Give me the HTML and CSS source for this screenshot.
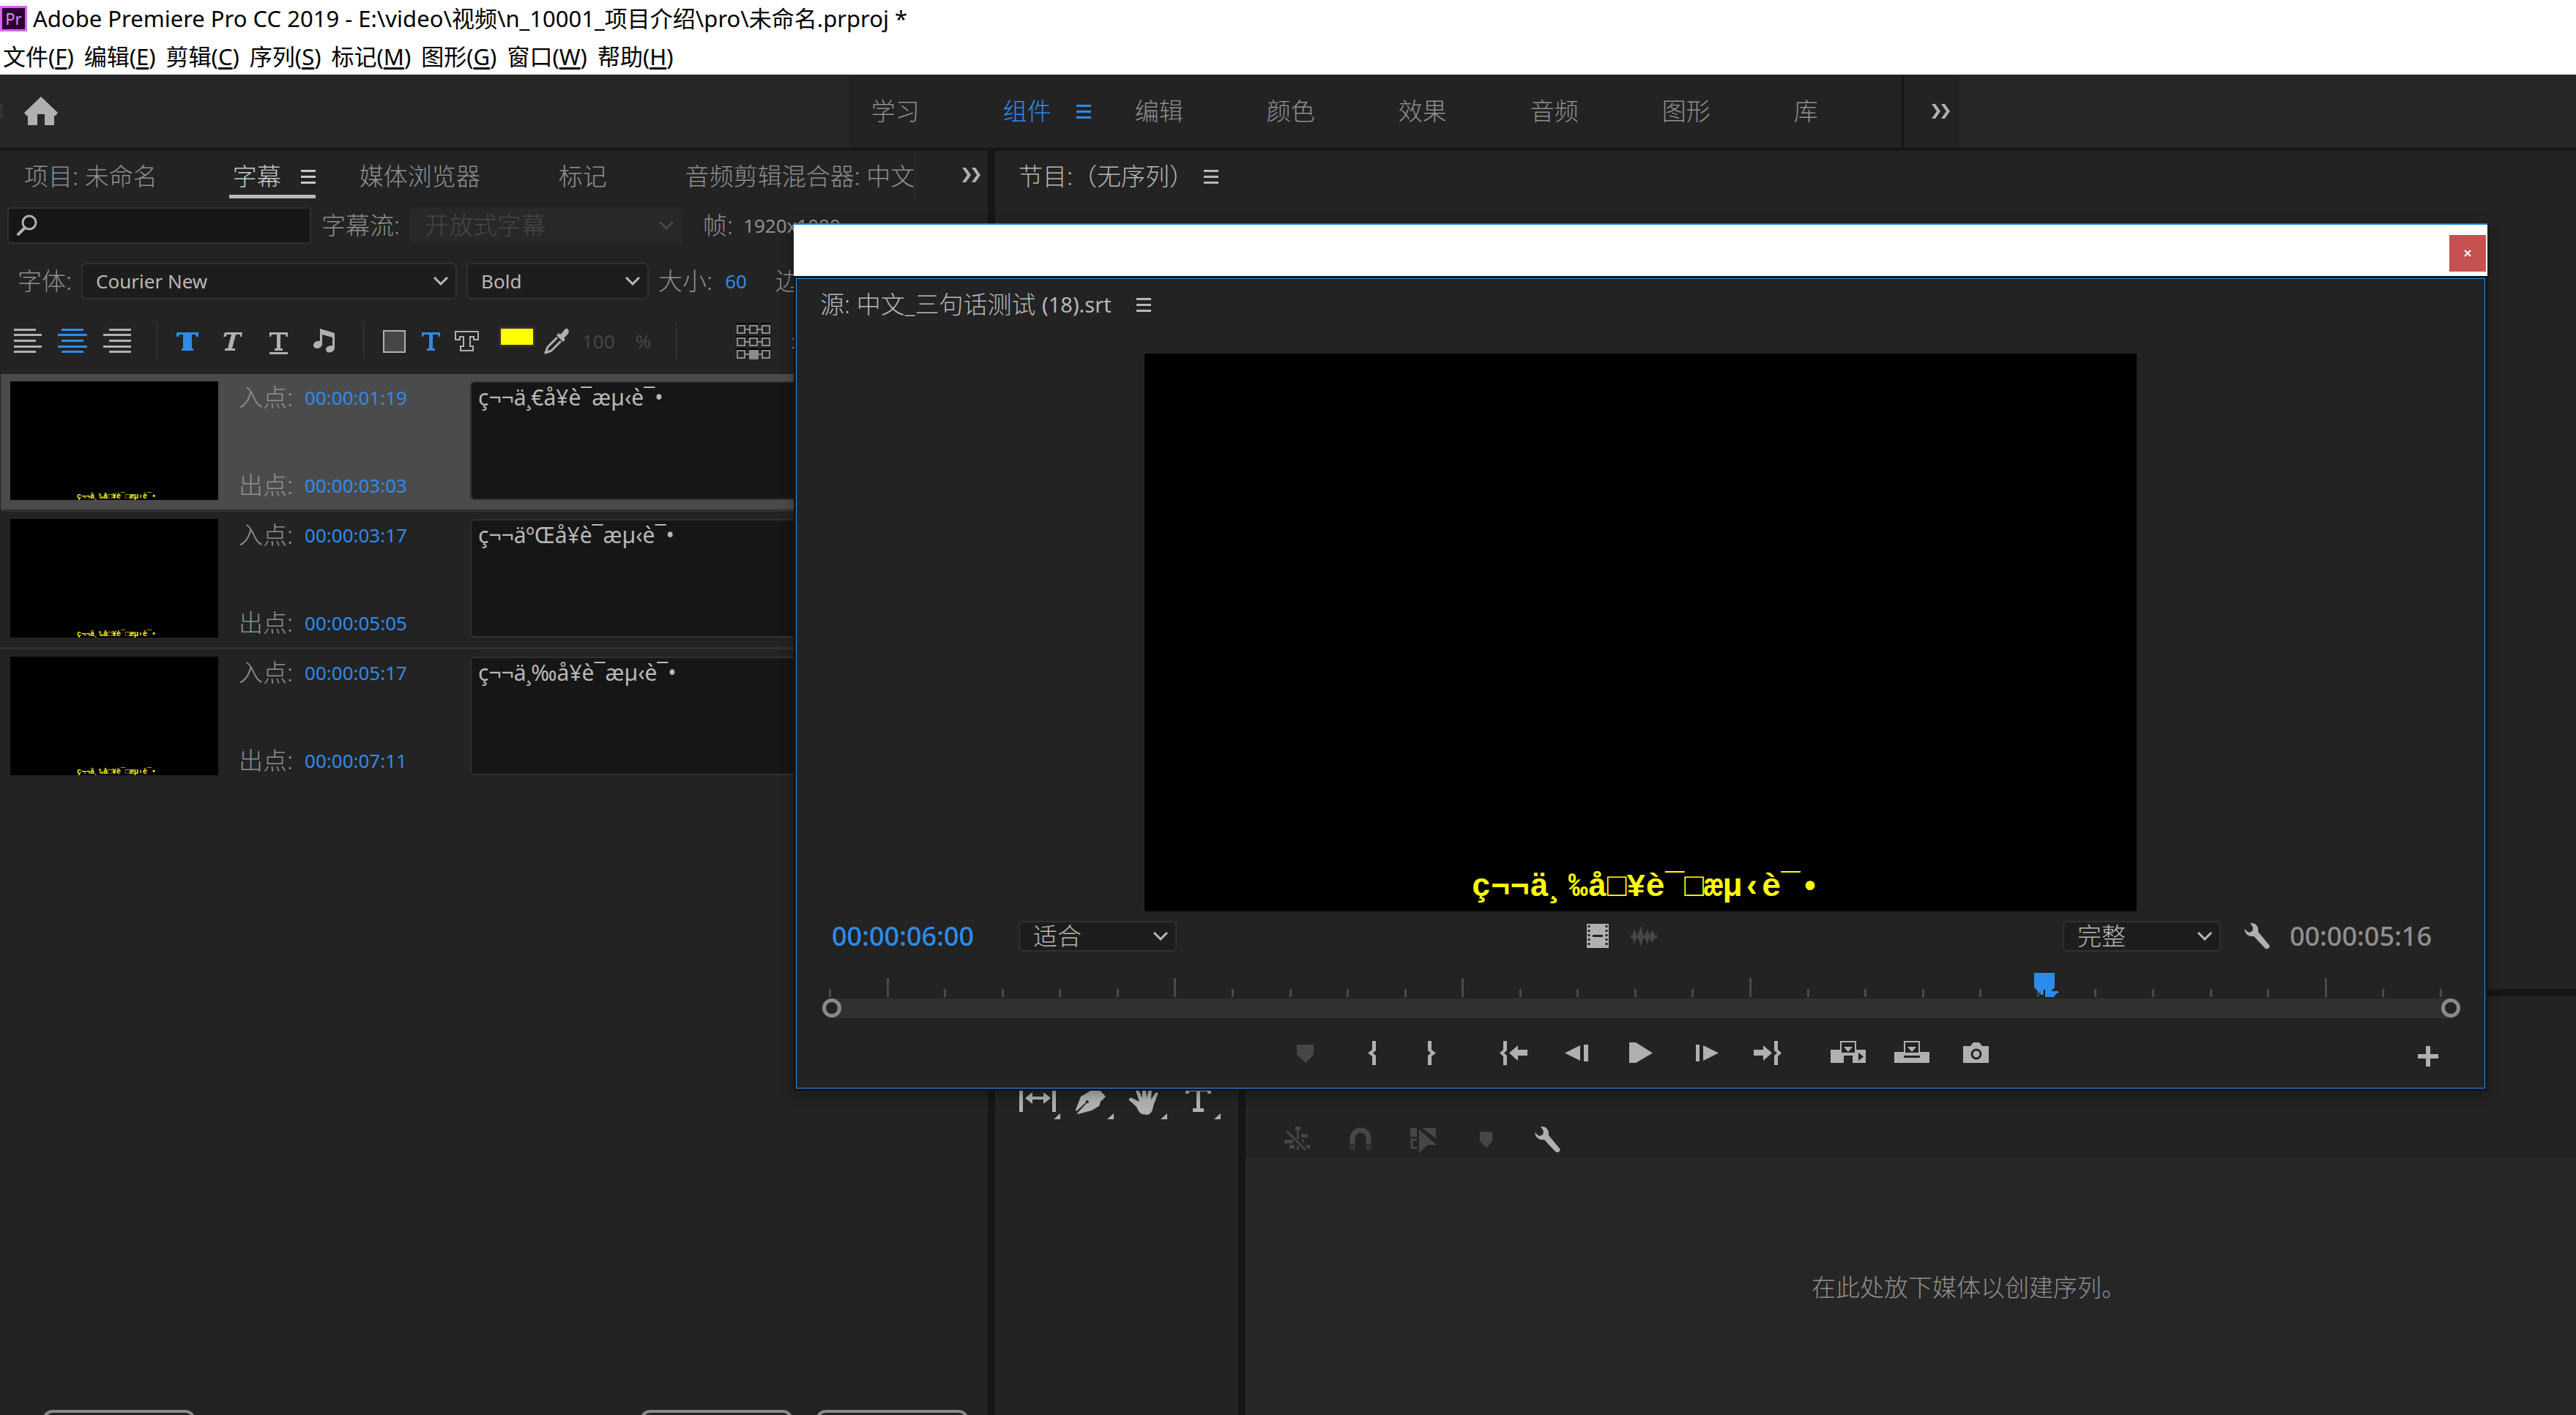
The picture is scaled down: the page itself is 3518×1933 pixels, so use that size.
FILE: index.html
```html
<!DOCTYPE html>
<html lang="zh-CN">
<head>
<meta charset="utf-8">
<title>Adobe Premiere Pro CC 2019</title>
<link rel="stylesheet" href="styles.css">
</head>
<body>
<div class="app">
  <header class="titlebar">
    <span class="logo">Pr</span>
    <h1>Adobe Premiere Pro CC 2019 - E:\video\视频\n_10001_项目介绍\pro\未命名.prproj *</h1>
  </header>
  <nav class="menubar">
    <button>文件(<u>F</u>)</button><button>编辑(<u>E</u>)</button><button>剪辑(<u>C</u>)</button><button>序列(<u>S</u>)</button><button>标记(<u>M</u>)</button><button>图形(<u>G</u>)</button><button>窗口(<u>W</u>)</button><button>帮助(<u>H</u>)</button>
  </nav>

  <div class="workspaces">
    <div class="ws-home">
      <span class="grip"></span>
      <button aria-label="主页"><svg width="46" height="40" viewBox="0 0 46 40"><path d="M23 0L46 22l-3 4h-2v13H28V24H18v15H5V26H3l-3-4z"/></svg></button>
    </div>
    <nav class="ws-tabs">
      <button>学习</button>
      <button class="active">组件<svg width="20" height="20" viewBox="0 0 20 20"><path d="M0 1h20v3H0zM0 9h20v3H0zM0 17h20v3H0z"/></svg></button>
      <button>编辑</button><button>颜色</button><button>效果</button><button>音频</button><button>图形</button><button>库</button>
    </nav>
    <button class="ws-more" aria-label="更多工作区"><svg width="28" height="22" viewBox="0 0 28 22"><path d="M1 1h5l7 10-7 10H1l7-10zM14 1h5l7 10-7 10h-5l7-10z"/></svg></button>
    <div class="ws-rest"></div>
  </div>

  <main class="panels">
    <section class="panel captions">
      <nav class="tabs">
        <button>项目: 未命名</button>
        <button class="active">字幕<svg width="20" height="20" viewBox="0 0 20 20"><path d="M0 1h20v3H0zM0 9h20v3H0zM0 17h20v3H0z"/></svg></button>
        <button>媒体浏览器</button>
        <button>标记</button>
        <button class="last">音频剪辑混合器: 中文</button>
        <button class="more" aria-label="更多面板"><svg width="28" height="22" viewBox="0 0 28 22"><path d="M1 1h5l7 10-7 10H1l7-10zM14 1h5l7 10-7 10h-5l7-10z"/></svg></button>
      </nav>
      <div class="row filter">
        <label class="search">
          <svg width="30" height="30" viewBox="0 0 30 30"><circle cx="18" cy="11" r="9" fill="none" stroke="currentColor" stroke-width="3"/><path d="M12 18L3 27" stroke="currentColor" stroke-width="4" stroke-linecap="round"/></svg>
          <input type="text" aria-label="搜索字幕">
        </label>
        <label for="stream">字幕流:</label>
        <span class="select stream"><select id="stream" disabled><option>开放式字幕</option></select><svg width="20" height="12" viewBox="0 0 20 12"><path d="M1 1l9 9 9-9"/></svg></span>
        <span class="frame">帧: </span><span class="latin">1920x1080</span>
      </div>
      <div class="row font">
        <label for="family">字体:</label>
        <span class="select family"><select id="family"><option>Courier New</option></select><svg width="20" height="12" viewBox="0 0 20 12"><path d="M1 1l9 9 9-9"/></svg></span>
        <span class="select style"><select aria-label="样式"><option>Bold</option></select><svg width="20" height="12" viewBox="0 0 20 12"><path d="M1 1l9 9 9-9"/></svg></span>
        <span>大小:</span><a class="latin value" href="#">60</a><span class="edge">边缘:</span>
      </div>
      <div class="toolbar">
        <div class="tools align">
          <button aria-label="左对齐"><svg width="40" height="40" viewBox="0 0 40 40"><path d="M1 3h30v3H1zM1 10h38v3H1zM1 18h30v3H1zM1 26h38v3H1zM1 33h30v3H1z"/></svg></button>
          <button class="on" aria-label="居中"><svg width="40" height="40" viewBox="0 0 40 40"><path d="M5 3h30v3H5zM0 10h40v3H0zM5 18h30v3H5zM0 26h40v3H0zM5 33h30v3H5z"/></svg></button>
          <button aria-label="右对齐"><svg width="40" height="40" viewBox="0 0 40 40"><path d="M9 3h30v3H9zM1 10h38v3H1zM9 18h30v3H9zM1 26h38v3H1zM9 33h30v3H9z"/></svg></button>
        </div>
        <i class="sep"></i>
        <div class="tools type">
          <button class="on" aria-label="粗体"><svg width="40" height="40" viewBox="0 0 40 40"><path d="M5 8h30v6h-3l-1-3h-5v19h2v3H12v-3h2V11H9l-1 3H5z"/></svg></button>
          <button aria-label="斜体"><svg width="40" height="40" viewBox="0 0 40 40"><path d="M9 8h24l-1 6h-2v-3h-6l-5 19h4v3H9v-3h4l5-19h-6l-2 3H7z"/></svg></button>
          <button aria-label="下划线"><svg width="40" height="40" viewBox="0 0 40 40"><path d="M8 8h25v6h-2l-1-3h-7v19h3v3H15v-3h3V11h-7l-1 3H8zM8 35h25v3H8z"/></svg></button>
          <button aria-label="音乐符号"><svg width="40" height="40" viewBox="0 0 40 40"><path d="M15 3l20 6v20c0 7-11 9-12 3 0-4 4-6 9-6V15L18 11v13c0 6-11 9-12 2 0-4 4-7 9-6z"/></svg></button>
        </div>
        <i class="sep"></i>
        <div class="tools fill">
          <button aria-label="背景颜色"><svg width="40" height="40" viewBox="0 0 40 40"><path d="M6 6h29v29H6z" fill="#464646" stroke="#b0b0b0" stroke-width="2"/></svg></button>
          <button class="on" aria-label="文本颜色"><svg width="40" height="40" viewBox="0 0 40 40"><path d="M8 8h25v6h-2l-1-3h-7v19h3v3H15v-3h3V11h-7l-1 3H8z"/></svg></button>
          <button aria-label="边缘颜色"><svg width="40" height="40" viewBox="0 0 40 40"><path d="M4 7h31v11h-6v-4h-5v13h4v6H11v-6h4V14h-5v4H4z" fill="none" stroke="#b0b0b0" stroke-width="2"/></svg></button>
        </div>
        <input class="swatch" type="color" value="#ffff00" aria-label="颜色">
        <button class="dropper" aria-label="吸管"><svg width="40" height="40" viewBox="0 0 40 40"><path d="M35 3c3 3 2 6-1 9l-4 4 2 2-3 3-9-9 3-3 2 2 4-4c2-3 4-5 6-4z"/><path d="M21 15L8 28l-3 8 8-3 13-13" fill="none" stroke="currentColor" stroke-width="3" stroke-linejoin="round"/></svg></button>
        <span class="latin dim">100</span><span class="latin dim pct">%</span>
        <i class="sep wide"></i>
        <button class="grid9" aria-label="位置"><svg width="48" height="50" viewBox="0 0 48 50"><path d="M1 0h13v2H1zM17 0h14v2H17zM34 0h13v2H34zM1 18h13v2H1zM17 18h14v2H17zM34 18h13v2H34zM1 35h13v2H1zM17 35h14v2H17zM34 35h13v2H34z" fill="#000"/><path d="M2 4h10v10H2zM19 4h10v10H19zM36 4h10v10H36zM2 21h10v10H2zM19 21h10v10H19zM36 21h10v10H36zM2 38h10v10H2zM36 38h10v10H36zM12 9h7M29 9h7M12 26h7M29 26h7M12 43h7M29 43h7" fill="none" stroke="#8c8c8c" stroke-width="2"/><path d="M18 37h13v13H18z" fill="#8c8c8c"/></svg></button>
        <span class="latin">x:</span>
      </div>
      <ol class="captions-list">
        <li class="selected">
          <div class="thumb"><span>ç¬¬ä¸‰å□¥è¯□æµ‹è¯•</span></div>
          <div class="times"><div>入点: <a href="#">00:00:01:19</a></div><div>出点: <a href="#">00:00:03:03</a></div></div>
          <textarea aria-label="字幕 1">ç¬¬ä¸€å¥è¯æµ‹è¯•</textarea>
        </li>
        <li>
          <div class="thumb"><span>ç¬¬ä¸‰å□¥è¯□æµ‹è¯•</span></div>
          <div class="times"><div>入点: <a href="#">00:00:03:17</a></div><div>出点: <a href="#">00:00:05:05</a></div></div>
          <textarea aria-label="字幕 2">ç¬¬äºŒå¥è¯æµ‹è¯•</textarea>
        </li>
        <li>
          <div class="thumb"><span>ç¬¬ä¸‰å□¥è¯□æµ‹è¯•</span></div>
          <div class="times"><div>入点: <a href="#">00:00:05:17</a></div><div>出点: <a href="#">00:00:07:11</a></div></div>
          <textarea aria-label="字幕 3">ç¬¬ä¸‰å¥è¯æµ‹è¯•</textarea>
        </li>
      </ol>
      <footer class="actions">
        <button aria-label="导入设置"></button><button class="add" aria-label="添加字幕"></button><button aria-label="删除字幕"></button>
      </footer>
    </section>

    <div class="right">
      <section class="panel program">
        <h2 class="panel-title">节目:（无序列）<svg width="20" height="20" viewBox="0 0 20 20"><path d="M0 1h20v3H0zM0 9h20v3H0zM0 17h20v3H0z"/></svg></h2>
      </section>
      <div class="bottom">
        <section class="panel toolbox">
          <button aria-label="外滑工具"><svg width="60" height="50" viewBox="0 0 60 50"><path d="M2 8h5v31H2zM47 8h5v31h-5zM10 20l10-8v6h15v-6l10 8-10 8v-6H20v6zM58 41v8h-9z"/></svg></button>
          <button aria-label="钢笔工具"><svg width="60" height="50" viewBox="0 0 60 50"><path d="M28 9l8 3 6 7-4 12-10 6-19 5-1-1 13-14c3 1 4-3 1-4-1 0-3 1-2 3L7 38l-1-2 7-18zM35 5l12 13-6 6-12-13zM58 41v8h-9z"/></svg></button>
          <button aria-label="手形工具"><svg width="60" height="50" viewBox="0 0 60 50"><path d="M24 42c-6-2-6-9-10-12L6 23c-1-4 4-4 6-2l8 4-5-15c1-3 4-2 5 1l4 9V7c1-3 4-3 5 0l1 13 3-13c1-3 5-2 4 1l-1 14 6-9c2-2 4 0 3 2l-6 16c-1 6-3 11-8 12zM58 41v8h-9z"/></svg></button>
          <button aria-label="文字工具"><svg width="60" height="50" viewBox="0 0 60 50"><path d="M10 6h35v8h-5v-3H30v23h5v5H20v-5h5V11H15v3h-5zM58 41v8h-9z"/></svg></button>
        </section>
        <section class="panel timeline">
          <div class="tl-tools">
            <button aria-label="嵌套"><svg width="40" height="40" viewBox="0 0 40 40"><path d="M17 2h7v5h-2v12h-3V7h-2zM25 12h9v5h-9zM2 20h12v5H2zM9 27h7v5H9zM19 28h3v6h-3zM25 20h4v5zM31 27h6v5h-3z"/><path d="M5 8l26 26" stroke="currentColor" stroke-width="3"/></svg></button>
            <button aria-label="对齐"><svg width="40" height="40" viewBox="0 0 40 40"><path d="M9 26V18a11 11 0 0122 0v8" fill="none" stroke="currentColor" stroke-width="7"/><path d="M5 27h8v7H5zM27 27h8v7h-8z" opacity=".5"/></svg></button>
            <button aria-label="链接选择项"><svg width="40" height="40" viewBox="0 0 40 40"><path d="M2 4h9v12H2zM18 4h19v14zM14 6l24 21H26L14 38z"/><path d="M11 20H4v11h7" fill="none" stroke="currentColor" stroke-width="3"/></svg></button>
            <button aria-label="标记"><svg width="40" height="40" viewBox="0 0 40 40"><path d="M11 9h17v13l-8 9-9-9z"/></svg></button>
            <button class="lit" aria-label="设置"><svg width="40" height="40" viewBox="0 0 40 40"><path d="M8 2c8-1 12 5 11 12l15 18c2 4-3 7-6 4L13 20C6 21 1 17 0 10l6 5 5-2 1-5z"/></svg></button>
          </div>
          <p class="drop">在此处放下媒体以创建序列。</p>
        </section>
      </div>
    </div>
  </main>

  <section class="window">
    <div class="win-bar"><button aria-label="关闭"><svg width="10" height="10" viewBox="0 0 10 10"><path d="M1 1l8 8M9 1L1 9" stroke="#fff" stroke-width="2"/></svg></button></div>
    <div class="win-body">
      <h2 class="panel-title">源: 中文_三句话测试 <span class="ext">(18).srt</span><svg width="20" height="20" viewBox="0 0 20 20"><path d="M0 1h20v3H0zM0 9h20v3H0zM0 17h20v3H0z"/></svg></h2>
      <div class="video"><p>ç¬¬ä¸‰å□¥è¯□æµ‹è¯•</p></div>
      <div class="controls">
        <div class="left"><a class="tc" href="#">00:00:06:00</a>
          <span class="select zoom"><select aria-label="缩放级别"><option>适合</option></select><svg width="20" height="12" viewBox="0 0 20 12"><path d="M1 1l9 9 9-9"/></svg></span></div>
        <div class="middle">
          <button aria-label="仅拖动视频"><svg width="40" height="40" viewBox="0 0 40 40"><path d="M5 3h30v33H5z"/><path d="M8 5v30M32 5v30" stroke="#232323" stroke-width="3" stroke-dasharray="3 3"/><path d="M13 18h14v3H13z" fill="#232323"/></svg></button>
          <button class="off" aria-label="仅拖动音频"><svg width="40" height="40" viewBox="0 0 40 40"><path d="M1 19h36v3H1zM3 20l3-10 4 10-4 11zM10 20l5-14 4 14-4 14zM19 20l5-10 3 10-3 11zM26 20l4-9 5 9-5 9z"/></svg></button>
        </div>
        <div class="end">
          <span class="select zoom"><select aria-label="回放分辨率"><option>完整</option></select><svg width="20" height="12" viewBox="0 0 20 12"><path d="M1 1l9 9 9-9"/></svg></span>
          <button aria-label="设置"><svg width="40" height="40" viewBox="0 0 40 40"><path d="M12 2c8-1 12 5 11 12l15 18c2 4-3 7-6 4L17 20C10 21 5 17 4 10l6 5 5-2 1-5z"/></svg></button>
          <span class="tc dur">00:00:05:16</span>
        </div>
      </div>
      <div class="ruler"><i></i><i></i><i></i><i></i><i></i><i></i><i></i><i></i><i></i><i></i><i></i><i></i><i></i><i></i><i></i><i></i><i></i><i></i><i></i><i></i><i></i><i></i><i></i><i></i><i></i><i></i><i></i><i></i><i></i>
        <svg class="playhead" width="34" height="33" viewBox="0 0 34 33"><path d="M0 0h28v20l-5 5h10v3h-3v2h-2v3H15v-3h-5L0 20z" fill="#2d8ceb"/><path d="M13 23h2v7h-2z" fill="#000"/></svg>
      </div>
      <div class="scrub"><button aria-label="缩小范围起点"></button><button aria-label="缩小范围终点"></button></div>
      <div class="transport">
        <div class="keys">
          <button class="off" aria-label="添加标记"><svg width="48" height="36" viewBox="0 0 48 36"><path d="M11 6h23v14L23 31 11 20z"/></svg></button>
          <button aria-label="标记入点"><svg width="48" height="36" viewBox="0 0 48 36"><path d="M32 1h-5v12l-6 4.500 6 4.500v12h5V21l-4-3.500 4-3.500z"/></svg></button>
          <button aria-label="标记出点"><svg width="48" height="36" viewBox="0 0 48 36"><path d="M16 1h5v12l6 4.500-6 4.500v12h-5V21l4-3.500-4-3.500z"/></svg></button>
        </div>
        <div class="keys">
          <button aria-label="转到入点"><svg width="48" height="36" viewBox="0 0 48 36"><path d="M15 1h-5v12l-5 4.500 5 4.500v12h5V21l-4-3.500 4-3.500zM18 17.500L30 7v6h13v8H30v7z"/></svg></button>
          <button aria-label="后退一帧"><svg width="48" height="36" viewBox="0 0 48 36"><path d="M7 17.500L28 7v21zM33 6h6v23h-6z"/></svg></button>
          <button aria-label="播放"><svg width="48" height="36" viewBox="0 0 48 36"><path d="M8 3h9l23 14.500L17 31H8z"/></svg></button>
          <button aria-label="前进一帧"><svg width="48" height="36" viewBox="0 0 48 36"><path d="M43 17.500L22 7v21zM12 6h5v23h-5z"/></svg></button>
          <button aria-label="转到出点"><svg width="48" height="36" viewBox="0 0 48 36"><path d="M32 1h5v12l5 4.500-5 4.500v12h-5V21l4-3.500-4-3.500zM29 17.500L17 7v6H4v8h13v7z"/></svg></button>
        </div>
        <div class="keys">
          <button aria-label="插入"><svg width="48" height="36" viewBox="0 0 48 36"><path d="M0 13h13v6h22v-6h13v18H30V21H18v10H0z"/><path d="M14 2h20v16H14z" fill="#232323" stroke="currentColor" stroke-width="2"/><path d="M18 9h12l-6 7z"/><path d="M38 17l7 5.500-7 5.500z" fill="#232323"/></svg></button>
          <button aria-label="覆盖"><svg width="48" height="36" viewBox="0 0 48 36"><path d="M0 16h48v15H0z"/><path d="M14 2h20v16H14z" fill="#232323" stroke="currentColor" stroke-width="2"/><path d="M18 9h12l-6 7z"/><path d="M13 21h22v3H13z" fill="#232323"/></svg></button>
          <button aria-label="导出帧"><svg width="48" height="36" viewBox="0 0 48 36"><path d="M7 8h10l4-5h8l4 5h9v23H7z"/><circle cx="25" cy="19" r="6" fill="none" stroke="#232323" stroke-width="3"/></svg></button>
        </div>
        <button class="plus" aria-label="按钮编辑器"><svg width="28" height="28" viewBox="0 0 28 28"><path d="M11 0h6v11h11v6H17v11h-6V17H0v-6h11z"/></svg></button>
      </div>
    </div>
  </section>
</div>
</body>
</html>
```
FILE: styles.css
```css
* { box-sizing: border-box; }
body {
  margin: 0;
  background: #161616;
  color: #8f8f8f;
  font: 300 33px/44px "Noto Sans", "Noto Sans CJK SC", sans-serif;
  overflow: hidden;
}
h1, h2, p, ol { margin: 0; padding: 0; font: inherit; }
button, select, input, textarea { font: inherit; color: inherit; margin: 0; }
button { display: inline-flex; align-items: center; padding: 0; border: 0; background: none; white-space: nowrap; }
svg { display: block; flex: none; fill: currentColor; }
a { color: #2d8ceb; text-decoration: none; }

.app { position: relative; display: flex; flex-direction: column; height: 100vh; }

/* title and menu */
.titlebar, .menubar { display: flex; align-items: center; background: #fff; color: #000; font-size: 31px; font-weight: 400; white-space: nowrap; }
.titlebar { height: 50px; gap: 8px; }
.logo {
  width: 37px; height: 35px; border: 3px solid #d766f0; background: #2a0033;
  color: #e088ff; font: 22px/28px "Noto Sans", sans-serif; text-align: center;
}
.menubar { height: 52px; padding: 4px 0 0 4px; gap: 14px; border-bottom: 2px solid #ececec; }
.menubar u { text-underline-offset: 3px; }

/* workspace bar */
.workspaces { display: flex; height: 100px; margin-bottom: 4px; background: #262626; color: #8f8f8f; }
.ws-home { flex: 11; display: flex; align-items: center; gap: 29px; color: #b0b0b0; }
.grip { width: 4px; height: 20px; background: repeating-linear-gradient(#484848 0 1px, #262626 1px 3px); }
.ws-tabs { display: flex; background: #232323; padding-left: 30px; border-right: 3px solid #161616; }
.ws-tabs button { width: 180px; gap: 34px; }
.ws-tabs button:last-child { width: 147px; }
.ws-tabs .active { color: #2d8ceb; }
.ws-more { width: 75px; padding-left: 37px; background: #232323; color: #b0b0b0; }
.ws-rest { flex: 8; }

/* docked panels */
.panels { flex: 1; min-height: 0; display: grid; grid-template-columns: 1349fr 2159fr; gap: 10px; }
.panel { background: #232323; min-width: 0; overflow: hidden; }
.right { display: flex; flex-direction: column; gap: 10px; min-width: 0; }
.program { flex: 2; }
.bottom { flex: 1; display: grid; grid-template-columns: 332px 1fr; gap: 10px; }
.panel-title { display: flex; align-items: center; height: 70px; padding-left: 32px; color: #b8b8b8; white-space: pre; }
.panel-title svg { margin-left: 14px; }

.captions { display: flex; flex-direction: column; white-space: nowrap; }
.tabs { display: flex; flex: none; gap: 60px; height: 65px; padding-left: 33px; }
.tabs button { height: 65px; padding: 5px 47px 0 0; }
.tabs .active { color: #c8c8c8; gap: 27px; margin-left: -9px; padding: 10px 0 0 5px; border-bottom: 5px solid #b8b8b8; }
.tabs .last { padding-right: 0; border-right: 1px solid #303030; }
.tabs .more { margin-left: auto; padding: 0 8px 0 0; color: #b0b0b0; }
.row { display: flex; flex: none; align-items: center; height: 50px; }
.filter { margin-top: 12px; padding-left: 10px; gap: 14px; }
.font { margin-top: 26px; padding-left: 24px; gap: 13px; }
.search {
  display: flex; align-items: center; width: 415px; height: 50px; padding-left: 10px;
  background: #161616; border: 2px solid #303030; border-radius: 5px; color: #b0b0b0;
}
.search input { flex: 1; min-width: 0; border: 0; background: none; }
.latin { font-size: 26px; font-weight: 400; }
.frame { margin-left: 14px; }
.value { margin-left: 4px; }
.edge { margin-left: 26px; }

.select { display: inline-grid; align-items: center; height: 50px; }
.select > * { grid-area: 1 / 1; }
.select select {
  appearance: none; width: 100%; height: 100%; padding: 0 18px; line-height: 38px;
  background: #1d1d1d; border: 2px solid #303030; border-radius: 6px; color: #b8b8b8;
}
.select svg { justify-self: end; margin-right: 12px; fill: none; stroke: #b8b8b8; stroke-width: 3; pointer-events: none; }
.stream { width: 372px; }
.stream select { background: #282828; border-color: #282828; color: #464646; opacity: 1; }
.stream svg { stroke: #464646; }
.family { width: 513px; }
.style { width: 249px; }
.family select, .style select { font-size: 26px; font-weight: 400; }
.zoom { width: 216px; height: 42px; }

.toolbar { display: flex; flex: none; align-items: center; height: 102px; padding: 12px 0 0 18px; color: #b0b0b0; }
.tools { display: flex; }
.align { gap: 21px; }
.type { gap: 22px; }
.fill { gap: 10px; }
.on { color: #2d8ceb; }
.sep { width: 3px; height: 50px; margin: 0 20px 0 33px; background: #2c2c2c; }
.sep.wide { margin-right: 80px; }
.swatch { width: 50px; height: 28px; margin: 0 9px 12px 23px; padding: 0; border: 3px solid #303030; background: none; appearance: none; }
.swatch::-webkit-color-swatch-wrapper { padding: 0; }
.swatch::-webkit-color-swatch { border: 0; border-radius: 0; }
.dropper { margin-right: 15px; }
.dim { color: #464646; }
.pct { margin-left: 28px; }
.grid9 { margin-right: 28px; }

.captions-list { flex: 1; min-height: 0; list-style: none; }
.captions-list li { display: flex; align-items: flex-start; height: 188px; padding: 10px 14px; border-bottom: 3px solid #303030; }
.captions-list li:last-child { border-color: #232323; }
.captions-list .selected { background: #4b4b4b; margin-left: 1px; padding-left: 13px; }
.thumb { display: flex; justify-content: center; align-items: flex-end; width: 284px; height: 162px; background: #000; overflow: hidden; }
.thumb span { height: 11px; margin-left: 6px; color: #ff0; font: 700 10px/14px "Liberation Mono", "DejaVu Sans Mono", monospace; }
.times { display: grid; gap: 76px; width: 344px; padding-left: 28px; }
.times div { display: flex; gap: 16px; white-space: nowrap; }
.times a { font-size: 26px; font-weight: 400; }
.captions-list textarea {
  flex: 1; height: 162px; padding: 0 9px; resize: none; overflow: hidden;
  background: #161616; border: 2px solid #303030; border-radius: 6px;
  color: #b8b8b8; font-size: 30px; font-weight: 400; line-height: 40px;
}
.actions { display: flex; flex: none; gap: 31px; height: 7px; padding: 0 26px 0 58px; }
.actions button { flex: none; width: 209px; height: 44px; border: 4px solid #8a8a8a; border-radius: 14px; }
.actions .add { margin-left: auto; }

.toolbox { display: flex; align-items: flex-start; gap: 13px; padding: 119px 0 0 31px; color: #b0b0b0; }
.timeline { display: flex; flex-direction: column; background: #262626; }
.tl-tools { display: flex; flex: none; align-items: flex-end; gap: 46px; height: 220px; padding: 0 0 4px 51px; background: #232323; color: #464646; }
.lit { color: #b0b0b0; }
.drop { flex: 1; display: grid; place-items: center; padding: 4px 0 0 158px; }

/* floating source monitor */
.window { position: absolute; left: 1084px; right: 121px; top: 305px; background: #161616; box-shadow: 0 4px 16px rgba(0, 0, 0, .35); }
.win-bar { display: flex; justify-content: flex-end; height: 72px; padding: 14px 2px 0; background: #fff; border-top: 2px solid #1a80d4; }
.win-bar button { justify-content: center; width: 50px; height: 50px; background: #c75050; }
.win-body { margin: 3px; border: 1px solid #2d8ceb; background: #232323; }
.ext { font-size: 29px; font-weight: 400; }
.panel-title .ext + svg { margin-left: 34px; }
.video { display: flex; align-items: flex-end; justify-content: center; margin: 32px 475px 0; aspect-ratio: 1355 / 762; background: #000; }
.video p { padding: 0 0 9px 14px; color: #ff0; font: 700 44px/48px "Liberation Mono", "DejaVu Sans Mono", monospace; white-space: nowrap; }
.controls { display: grid; grid-template-columns: 1fr auto 1fr; align-items: center; height: 42px; margin: 12px 72px 0 48px; color: #b0b0b0; }
.left, .middle, .end { display: flex; align-items: center; }
.tc { width: 255px; font-size: 36px; font-weight: 500; }
.dur { width: auto; margin-left: 26px; color: #8f8f8f; }
.middle { gap: 24px; padding-right: 30px; }
.off { color: #464646; }
.end { justify-content: flex-end; }
.end button { margin-left: 28px; }
.ruler { position: relative; display: flex; justify-content: space-between; align-items: flex-end; height: 33px; margin: 30px 58px 0 44px; }
.ruler i { width: 3px; height: 11px; background: #4a4a4a; }
.ruler i:nth-child(5n+2) { height: 26px; }
.playhead { position: absolute; left: 74.7%; top: 0; }
.scrub { display: flex; justify-content: space-between; height: 27px; margin: 2px 33px 0 35px; border-radius: 14px; background: #303030; }
.scrub button { width: 26px; height: 26px; border: 5px solid #8a8a8a; border-radius: 13px; background: #232323; }
.transport { position: relative; display: flex; justify-content: center; gap: 22px; padding: 30px 0 29px; color: #b0b0b0; }
.keys { display: flex; }
.keys button { width: 87px; justify-content: center; }
.plus { position: absolute; right: 63px; top: 38px; }
```
